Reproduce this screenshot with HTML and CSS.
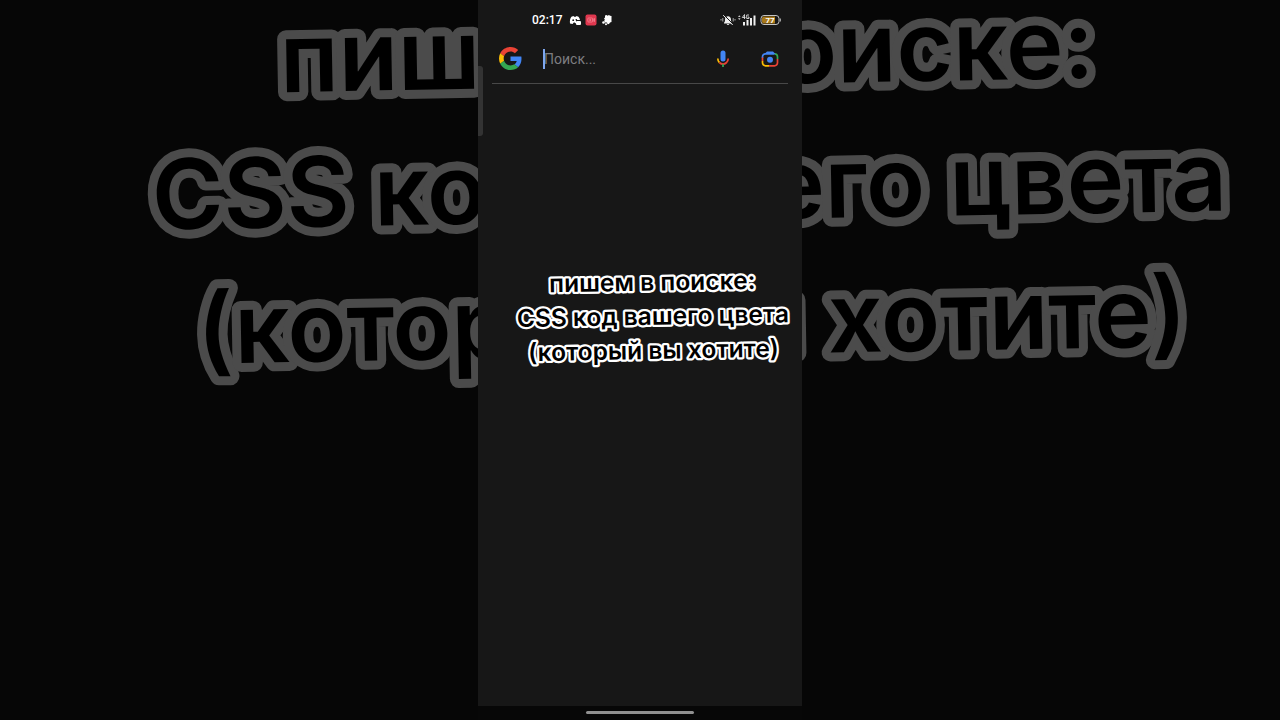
FILE: index.html
```html
<!DOCTYPE html>
<html lang="ru">
<head>
    <meta charset="UTF-8">
    <meta name="viewport" content="width=device-width, initial-scale=1.0">
    <title>Поиск</title>
    <link rel="stylesheet" href="styles.css">
</head>
<body>
    <div class="backdrop" aria-hidden="true">
        <svg class="caption caption-large" viewBox="0 0 1200 400">
            <g transform="rotate(-1 600 220)">
                <text x="600" y="85">пишем в поиске:</text>
                <text x="600" y="220">CSS код вашего цвета</text>
                <text x="600" y="355">(который вы хотите)</text>
            </g>
        </svg>
    </div>

    <div class="phone">
        <header class="status">
            <div class="status-group">
                <span class="clock">02:17</span>
                <svg class="status-icon" viewBox="0 0 12 12">
                    <path fill="#fff" d="M1 9.500C.6 6.500 1.200 4.200 2.400 2.700L4.500 2l.6.8h1.800l.6-.8 2 .7c.8 1 1.300 2 1.500 3.300H7v3.500L5 8.200 3.600 10z"/>
                    <circle cx="4.200" cy="6.200" r=".9" fill="#171717"/>
                    <circle cx="7.300" cy="5.800" r=".8" fill="#171717"/>
                    <rect x="7" y="7" width="5" height="4" rx="1" fill="#fff"/>
                </svg>
                <svg class="status-icon" viewBox="0 0 12 12">
                    <rect x=".5" y=".5" width="11" height="11" rx="2" fill="#e0384f"/>
                    <g fill="none" stroke="#f7929f" stroke-width=".7">
                        <rect x="2.800" y="4" width="4.800" height="4" rx=".8"/>
                        <path d="M8 5.500l1.500-1v3L8 6.500M5.200 5v2M4.200 6h2"/>
                    </g>
                </svg>
                <svg class="status-icon" viewBox="0 0 12 12">
                    <path fill="#fff" d="M4 1.500L5.500 1l1 .7L8 1l1 .8 1.500.2v6L9 8.500l-1 1.500-1.500.2L6 8.500H4L3.200 7l.6-1.500-.8-1 1-1z"/>
                    <circle cx="2.500" cy="8.500" r="1.300" fill="#fff"/>
                    <circle cx="5" cy="10.300" r="1" fill="#fff"/>
                </svg>
            </div>
            <div class="status-group status-right">
                <svg class="mute-icon" viewBox="0 0 16 12">
                    <path fill="#eee" d="M4 8.700c1-.8 1-1.800 1-3.200 0-2 1.200-3.300 3-3.300s3 1.300 3 3.300c0 1.400 0 2.400 1 3.200V9.500H4zM6.700 10h2.600c-.3 1.300-2.300 1.300-2.600 0z"/>
                    <path stroke="#171717" stroke-width="1" d="M4 1l9 9"/>
                    <path fill="none" stroke="#eee" d="M3.200 1.200l9.500 9.800"/>
                    <path fill="none" stroke="#ccc" stroke-width=".8" d="M2.800 4v3.500M1 5v1.500M13.200 4v3.500M15 5v1.500"/>
                </svg>
                <svg class="signal-icon" viewBox="0 0 18 12">
                    <path fill="#ccc" d="M0 3l1.300-1.700L2.600 3zM0 4.300h2.600L1.300 6z"/>
                    <path fill="none" stroke="#ddd" stroke-width=".9" d="M6.500.5L4.300 3.500H7.500M6.500.5v4.500M11 1H8.700v3.500H11V3H9.800"/>
                    <path fill="#eee" d="M5 8h2v3.500H5zM8.500 6h2v5.500h-2zM12 4h2v7.500h-2zM15.500 1.500h2v10h-2z"/>
                </svg>
                <svg class="battery-icon" viewBox="0 0 21 12">
                    <rect x="1" y="1.500" width="18" height="9" rx="3" fill="#171717" stroke="#c4c4c4"/>
                    <path fill="#a8791a" d="M4 2.500h11v7H4a2 2 0 0 1-2-2v-3a2 2 0 0 1 2-2z"/>
                    <path stroke="#c4c4c4" d="M20.300 4.500v3"/>
                    <text x="10" y="9" class="battery-text">77</text>
                </svg>
            </div>
        </header>

        <form class="search">
            <svg class="google-icon" viewBox="0 0 48 48">
                <path fill="#ea4335" d="M24 9.500c3.540 0 6.710 1.220 9.210 3.600l6.850-6.850C35.900 2.380 30.470 0 24 0 14.620 0 6.510 5.380 2.560 13.220l7.980 6.190C12.430 13.720 17.740 9.500 24 9.500z"/>
                <path fill="#4285f4" d="M46.980 24.550c0-1.570-.15-3.090-.38-4.550H24v9.020h12.940c-.58 2.960-2.260 5.480-4.780 7.180l7.730 6c4.510-4.180 7.090-10.360 7.090-17.650z"/>
                <path fill="#fbbc05" d="M10.530 28.590c-.48-1.450-.76-2.990-.76-4.590s.27-3.140.76-4.590l-7.980-6.190C.92 16.460 0 20.120 0 24s.92 7.540 2.560 10.780z"/>
                <path fill="#34a853" d="M24 48c6.480 0 11.930-2.130 15.890-5.810l-7.730-6c-2.150 1.450-4.920 2.300-8.160 2.300-6.260 0-11.570-4.220-13.470-9.910l-7.980 6.190C6.510 42.620 14.620 48 24 48z"/>
            </svg>
            <div class="field">
                <span class="caret"></span>
                <input class="query" type="text" placeholder="Поиск..." aria-label="Поиск">
            </div>
            <button class="icon-button" type="button" aria-label="Голосовой поиск">
                <svg class="mic-icon" viewBox="0 0 18 20">
                    <rect x="6.500" y="1.500" width="5" height="11" rx="2.500" fill="#4285f4"/>
                    <g fill="none" stroke-width="1.700">
                        <path stroke="#fbbc05" d="M3.800 9.500c0 2 .7 3.200 1.600 4"/>
                        <path stroke="#ea4335" d="M5.400 13.500c2.200 2 5 2 7.200 0 1-1 1.600-2.200 1.600-4"/>
                        <path stroke="#34a853" d="M9 15v3"/>
                    </g>
                </svg>
            </button>
            <button class="icon-button" type="button" aria-label="Поиск по картинке">
                <svg class="lens-icon" viewBox="0 0 20 20">
                    <g fill="none" stroke-width="1.700">
                        <path stroke="#4285f4" d="M2.500 9V7.800a3 3 0 0 1 3-3h9"/>
                        <path stroke="#34a853" d="M14.500 4.800a3 3 0 0 1 3 3V10"/>
                        <path stroke="#ea4335" d="M17.500 10v3.800a3 3 0 0 1-3 3H9"/>
                        <path stroke="#fbbc05" d="M9 16.800H5.500a3 3 0 0 1-3-3V12"/>
                        <path stroke="#ea4335" d="M2.500 8.500V12"/>
                    </g>
                    <path fill="#4285f4" d="M4.500 5L7 2.500h6L15.500 5z"/>
                    <circle cx="10" cy="10.800" r="3" fill="#4285f4"/>
                </svg>
            </button>
        </form>

        <main class="content">
            <svg class="caption" viewBox="0 0 1200 400">
                <g transform="rotate(-1 600 220)">
                    <text x="600" y="85">пишем в поиске:</text>
                    <text x="600" y="220">CSS код вашего цвета</text>
                    <text x="600" y="355">(который вы хотите)</text>
                </g>
            </svg>
        </main>

        <footer class="nav">
            <span class="home-bar"></span>
        </footer>
        <span class="edge-handle"></span>
    </div>
</body>
</html>
```

FILE: styles.css
```css
* {
    box-sizing: border-box;
}

body {
    position: relative;
    display: flex;
    justify-content: center;
    height: 100vh;
    margin: 0;
    overflow: hidden;
    background: #060606;
    font-family: Roboto, "Liberation Sans", sans-serif;
}

/* enlarged copy of the caption behind the phone */
.backdrop {
    position: absolute;
    inset: 0;
    display: flex;
    justify-content: center;
    align-items: flex-start;
    padding-left: 100px;
}

.caption {
    flex: none;
    width: 304px;
    overflow: visible;
    fill: #000;
    stroke: #fff;
    stroke-width: 18px;
    stroke-linejoin: round;
    paint-order: stroke fill;
    font-family: Inter, sans-serif;
    font-size: 97px;
    font-weight: 600;
    text-anchor: middle;
}

.caption-large {
    width: 1200px;
    stroke: #4b4b4b;
}

.phone {
    position: relative;
    display: flex;
    flex-direction: column;
    height: 100%;
    min-width: 0;
    aspect-ratio: 9 / 20;
    background: #171717;
}

.status {
    display: flex;
    justify-content: space-between;
    align-items: center;
    height: 40px;
    padding: 0 21px 0 54px;
}

.status-group {
    display: flex;
    align-items: center;
    gap: 4px;
}

.status-right {
    gap: 2px;
}

.clock {
    margin-right: 3px;
    color: #fff;
    font-size: 12px;
    font-weight: 500;
}

.status-icon {
    width: 12px;
    height: 12px;
}

.mute-icon {
    width: 16px;
    height: 12px;
}

.signal-icon {
    width: 18px;
    height: 12px;
}

.battery-icon {
    width: 21px;
    height: 12px;
    margin-left: 2px;
}

.battery-text {
    fill: #fff;
    font-size: 8px;
    font-weight: 700;
    text-anchor: middle;
}

.search {
    display: flex;
    align-items: center;
    height: 44px;
    margin: 0 14px;
    padding: 0 8px 6px 7px;
    border-bottom: 1px solid #484848;
}

.google-icon {
    flex: none;
    width: 23px;
    height: 23px;
}

.field {
    position: relative;
    flex: 1;
    min-width: 0;
    margin-left: 21px;
}

.query {
    width: 100%;
    padding: 0 0 0 1px;
    border: 0;
    outline: 0;
    background: none;
    color: #e8eaed;
    font-family: inherit;
    font-size: 14px;
    line-height: 20px;
}

.query::placeholder {
    color: #7d7d80;
    opacity: 1;
}

.caret {
    position: absolute;
    top: 0;
    left: 0;
    width: 2px;
    height: 20px;
    background: #7ea6ee;
}

.icon-button {
    display: flex;
    padding: 0;
    border: 0;
    background: none;
    cursor: pointer;
}

.icon-button + .icon-button {
    margin-left: 28px;
}

.mic-icon {
    width: 18px;
    height: 20px;
}

.lens-icon {
    width: 20px;
    height: 20px;
}

.content {
    flex: 1;
    display: flex;
    flex-direction: column;
    align-items: center;
    padding: 185px 0 0 26px;
}

.nav {
    display: flex;
    justify-content: center;
    align-items: flex-start;
    height: 14px;
    padding-top: 5px;
    background: #070707;
}

.home-bar {
    width: 108px;
    height: 3px;
    border-radius: 2px;
    background: #909090;
}

.edge-handle {
    position: absolute;
    top: 66px;
    left: 0;
    width: 5px;
    height: 70px;
    border-radius: 0 3px 3px 0;
    background: #333;
}
```
